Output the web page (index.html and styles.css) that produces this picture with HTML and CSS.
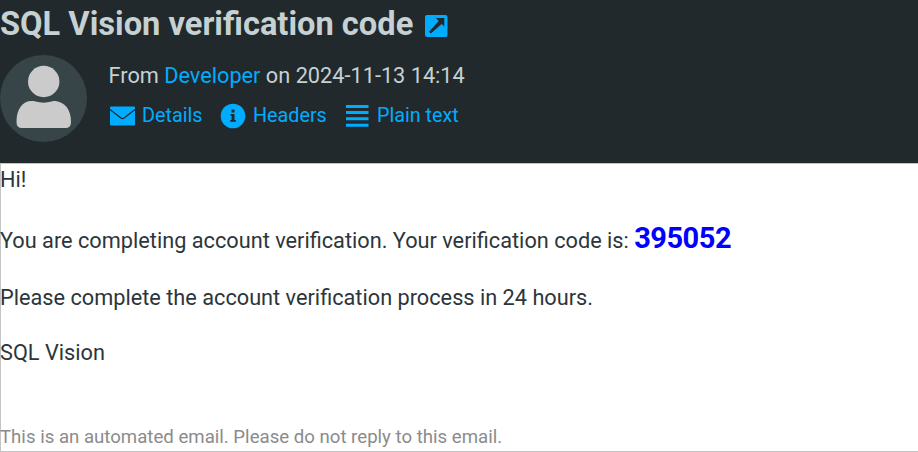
FILE: index.html
```html
<!DOCTYPE html>
<html lang="en"><head><meta charset="utf-8"><title>SQL Vision verification code</title><link rel="stylesheet" href="styles.css"></head>
<body>
<header class="header">
  <h1 class="subject"><span>SQL Vision verification code</span>
    <svg class="open" viewBox="0 0 24 24"><rect x="1" y="1" width="22.500" height="22" rx="2" fill="#00acff"/><path d="M12 4h8.300v8.500l-2.600-2.600L6.800 19.500 5 17.700 14.700 7z" fill="#21292c"/></svg>
  </h1>
  <div class="meta">
    <svg class="avatar" viewBox="0 0 88 88"><circle cx="43.500" cy="43.500" r="43.500" fill="#374549"/><circle cx="43.700" cy="26.500" r="15.700" fill="#cbcbcb"/><path d="M16.500 67c0-13 6-21 15-21 2 0 3 0 4 .6q8 2.200 16 0c1-.6 3-.6 4-.6 9 1 15.500 8 15.500 21q0 6-5.500 6H22q-5.500 0-5.500-6z" fill="#cbcbcb"/></svg>
    <div class="info">
      <div class="from">From <a>Developer</a> on 2024-11-13 14:14</div>
      <nav class="links">
        <a class="details"><svg viewBox="0 0 26 26"><path d="M1 4.500q0-1 1-1h23q1 0 1 1v1.300L15 14.300q-1.500 1.200-3 0L1 5.800zM1 7.300l10.500 8.200q2 1.500 4 0L26 7.300V21q0 1.500-1.500 1.500h-22Q1 22.500 1 21z" fill="currentColor"/></svg><span>Details</span></a>
        <a class="headers"><svg viewBox="0 0 26 26"><circle cx="13" cy="13" r="12.300" fill="currentColor"/><path d="M11.500 6.500h3v3h-3zM10.500 11h4v6h1.300v1.800h-5.500V17h1.300v-4.200h-1.100z" fill="#21292c"/></svg><span>Headers</span></a>
        <a class="plain"><svg viewBox="0 0 26 26"><path d="M1 2h22.500v3H1zm0 6h22.500v3H1zm0 6.300h22.500v3H1zm0 6.400h22.500v3H1z" fill="currentColor"/></svg><span>Plain text</span></a>
      </nav>
    </div>
  </div>
</header>
<main class="message">
  <p class="hi">Hi!</p>
  <p class="code">You are completing account verification. Your verification code is: <b>395052</b></p>
  <p class="note">Please complete the account verification process in 24 hours.</p>
  <p class="sign">SQL Vision</p>
  <p class="auto">This is an automated email. Please do not reply to this email.</p>
</main>
</body></html>
```
FILE: styles.css
```css
*{box-sizing:border-box}
body{margin:0;font-family:Roboto,sans-serif;font-size:21.730px;color:#2c363a;background:#fff;overflow:hidden}
.header{height:163px;background:#21292c;color:#c5d1d3}
.subject{margin:0;height:55px;font-size:32.640px;line-height:48px;font-weight:700;display:flex;white-space:nowrap}
.open{width:24px;height:24px;margin:14px 0 0 11px}
.meta{display:flex}
.avatar{width:88px;height:88px}
.info{margin-left:21px}
.from{height:42px;line-height:42px;white-space:nowrap;margin-left:-.5px}
a{color:#00acff}
.links{display:flex;font-size:19.750px;line-height:38px;white-space:nowrap}
.links a{display:flex}
.links svg{width:26px;height:26px;margin-top:6px;margin-right:7px}
.details{width:111px}
.headers{width:125px}
.plain svg{margin-right:6px}
.message{height:289px;border:1px solid #c4c4c4;border-right:0}
p{margin:0 0 0 -1px;white-space:nowrap}
.hi{height:50px;line-height:31px}
.code{height:60px;line-height:48px}
.code b{font-size:29px;letter-spacing:-.5px;color:#00f}
.note{height:50px;line-height:47px}
.sign{height:80px;line-height:57px}
.auto{font-size:18.640px;line-height:66px;color:#8b8b8b}
```
